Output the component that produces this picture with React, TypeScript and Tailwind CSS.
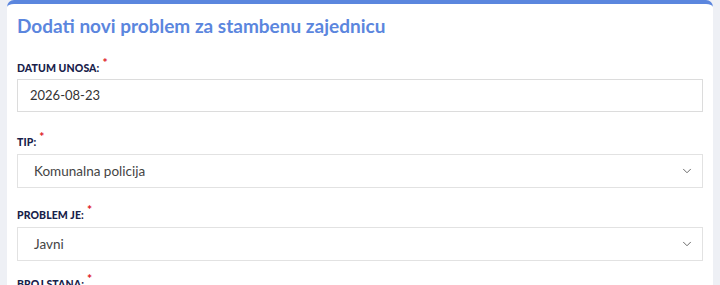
import { ChevronDown } from 'lucide-react';

const font = { fontFamily: 'Lato, "Noto Sans", sans-serif' };

function Label({ text }: { text: string }) {
  return (
    <label className="block text-[10.5px] leading-[16px] font-black uppercase tracking-[0.1px] text-[#18214a]">
      {text}
      <span className="ml-[3px] relative -top-[5px] text-[12px] leading-none text-[#e0262d]">*</span>
    </label>
  );
}

function SelectBox({ value }: { value: string }) {
  return (
    <div className="flex h-[34px] items-center justify-between border border-[#e2e2e2] bg-white pl-4 pr-2">
      <span className="text-[13.5px] text-[#444]">{value}</span>
      <ChevronDown className="h-[14px] w-[14px] text-[#555]" strokeWidth={1.5} />
    </div>
  );
}

export default function App() {
  return (
    <div className="h-[285px] overflow-hidden bg-[#eef0f5] px-[7px]" style={font}>
      <div className="h-full rounded-t-[7px] border-t-[4px] border-[#5b86de] bg-white px-[10px]">
        {/* Header */}
        <h2 className="pt-[10px] text-[19px] font-bold leading-[24px] text-[#5b86de]">
          Dodati novi problem za stambenu zajednicu
        </h2>

        {/* Datum */}
        <div className="mt-[22px]">
          <Label text="Datum unosa:" />
          <div className="mt-[3px] flex h-[33px] items-center border border-[#dcdcdc] bg-white px-3">
            <span className="text-[13px] text-[#333]">2026-08-23</span>
          </div>
        </div>

        {/* Tip */}
        <div className="mt-[22px]">
          <Label text="Tip:" />
          <div className="mt-[4px]">
            <SelectBox value="Komunalna policija" />
          </div>
        </div>

        {/* Problem je */}
        <div className="mt-[19px]">
          <Label text="Problem je:" />
          <div className="mt-[4px]">
            <SelectBox value="Javni" />
          </div>
        </div>

        {/* Broj stana */}
        <div className="mt-[15px]">
          <Label text="Broj stana:" />
        </div>
      </div>
    </div>
  );
}
